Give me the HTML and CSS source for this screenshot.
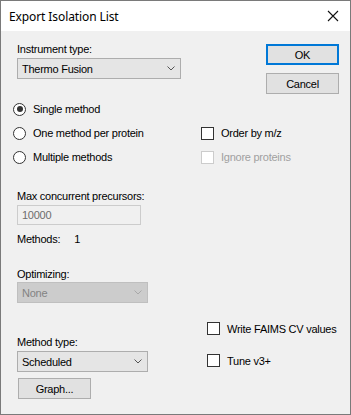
FILE: index.html
```html
<!DOCTYPE html>
<html lang="en">
<head>
    <meta charset="UTF-8">
    <title>Export Isolation List</title>
    <link rel="stylesheet" href="styles.css">
</head>
<body>
    <div class="window">
        <div class="titlebar">
            <span class="title">Export Isolation List</span>
            <svg class="close" width="12" height="12" viewBox="0 0 12 12">
                <path d="M1 1 L11 11 M11 1 L1 11" stroke="#111" stroke-width="1.1" fill="none"/>
            </svg>
        </div>
        <div class="content">
            <div class="top-row">
                <div class="field instrument">
                    <div class="label">Instrument type:</div>
                    <div class="combo wide">
                        <span>Thermo Fusion</span>
                        <svg class="arrow" width="8" height="5" viewBox="0 0 8 5"><path d="M0.5 0.5 L4 4 L7.5 0.5" stroke="#555" fill="none"/></svg>
                    </div>
                </div>
                <div class="buttons">
                    <div class="button default">OK</div>
                    <div class="button cancel">Cancel</div>
                </div>
            </div>

            <div class="options">
                <div class="option-row">
                    <div class="radio-item"><span class="radio checked"></span>Single method</div>
                </div>
                <div class="option-row">
                    <div class="radio-item"><span class="radio"></span>One method per protein</div>
                    <div class="check-item"><span class="check"></span>Order by m/z</div>
                </div>
                <div class="option-row">
                    <div class="radio-item"><span class="radio"></span>Multiple methods</div>
                    <div class="check-item disabled"><span class="check"></span>Ignore proteins</div>
                </div>
            </div>

            <div class="field precursors">
                <div class="label">Max concurrent precursors:</div>
                <div class="textbox">10000</div>
                <div class="methods"><span>Methods:</span><span class="count">1</span></div>
                <div class="label optimizing">Optimizing:</div>
                <div class="combo narrow disabled">
                    <span>None</span>
                    <svg class="arrow" width="8" height="5" viewBox="0 0 8 5"><path d="M0.5 0.5 L4 4 L7.5 0.5" stroke="#a8a8a8" fill="none"/></svg>
                </div>
            </div>

            <div class="bottom-row">
                <div class="field method-type">
                    <div class="label">Method type:</div>
                    <div class="combo narrow">
                        <span>Scheduled</span>
                        <svg class="arrow" width="8" height="5" viewBox="0 0 8 5"><path d="M0.5 0.5 L4 4 L7.5 0.5" stroke="#555" fill="none"/></svg>
                    </div>
                    <div class="button graph">Graph...</div>
                </div>
                <div class="right-checks">
                    <div class="check-item"><span class="check"></span>Write FAIMS CV values</div>
                    <div class="check-item"><span class="check"></span>Tune v3+</div>
                </div>
            </div>
        </div>
    </div>
</body>
</html>
```

FILE: styles.css
```css
body {
    margin: 0;
    font-family: "Liberation Sans", Arial, sans-serif;
    font-size: 11px;
    letter-spacing: -0.25px;
    color: #000;
}
.window {
    width: 351px;
    height: 415px;
    box-sizing: border-box;
    border: 1px solid #7a7a7a;
    background-color: #f0f0f0;
    display: flex;
    flex-direction: column;
}
.titlebar {
    height: 30px;
    background-color: white;
    display: flex;
    align-items: center;
    justify-content: space-between;
    padding: 0 11px 0 8px;
    flex-shrink: 0;
}
.title {
    font-family: "Noto Sans", sans-serif;
    font-size: 12px;
    letter-spacing: -0.1px;
    margin-top: 1px;
}
.content {
    flex: 1;
}
.label {
    line-height: 13px;
    height: 13px;
}
.field {
    margin-left: 16px;
}
.top-row {
    height: 66px;
    display: flex;
    justify-content: space-between;
}
.instrument {
    padding-top: 12px;
}
.combo {
    height: 21px;
    box-sizing: border-box;
    border: 1px solid #adadad;
    background-color: #e5e5e5;
    display: flex;
    align-items: center;
    justify-content: space-between;
    padding: 0 5px 0 4px;
    margin-top: 2px;
}
.combo.wide {
    width: 164px;
}
.combo.narrow {
    width: 131px;
}
.combo.disabled {
    background-color: #cccccc;
    border-color: #bfbfbf;
    color: #838383;
}
.buttons {
    padding-top: 13px;
    margin-right: 11px;
    display: flex;
    flex-direction: column;
    gap: 8px;
}
.button {
    width: 73px;
    height: 21px;
    box-sizing: border-box;
    border: 1px solid #adadad;
    background-color: #e1e1e1;
    display: flex;
    align-items: center;
    justify-content: center;
}
.button.default {
    border: 2px solid #0078d7;
}
.options {
    padding-left: 12px;
}
.option-row {
    height: 24px;
    display: flex;
    align-items: center;
}
.radio-item {
    width: 188px;
    display: flex;
    align-items: center;
}
.radio {
    width: 13px;
    height: 13px;
    box-sizing: border-box;
    border: 1px solid #333;
    border-radius: 50%;
    background-color: white;
    margin-right: 7px;
    display: flex;
    align-items: center;
    justify-content: center;
}
.radio.checked::after {
    content: "";
    width: 6px;
    height: 6px;
    border-radius: 50%;
    background-color: #333;
}
.check-item {
    display: flex;
    align-items: center;
    height: 13px;
}
.check {
    width: 13px;
    height: 13px;
    box-sizing: border-box;
    border: 1px solid #333;
    background-color: white;
    margin-right: 7px;
}
.check-item.disabled {
    color: #a0a0a0;
}
.check-item.disabled .check {
    border-color: #cccccc;
}
.precursors {
    padding-top: 21px;
}
.textbox {
    width: 124px;
    height: 20px;
    box-sizing: border-box;
    border: 1px solid #cccccc;
    color: #6d6d6d;
    padding-left: 4px;
    line-height: 18px;
    margin-top: 2px;
}
.methods {
    margin-top: 8px;
    line-height: 13px;
}
.methods .count {
    margin-left: 14px;
}
.optimizing {
    margin-top: 22px;
}
.precursors .combo {
    margin-top: 1px;
}
.bottom-row {
    display: flex;
}
.method-type {
    width: 190px;
    padding-top: 33px;
}
.graph {
    margin-top: 6px;
    margin-left: 1px;
}
.right-checks {
    display: flex;
    flex-direction: column;
    padding-top: 19px;
    gap: 19px;
}
```
